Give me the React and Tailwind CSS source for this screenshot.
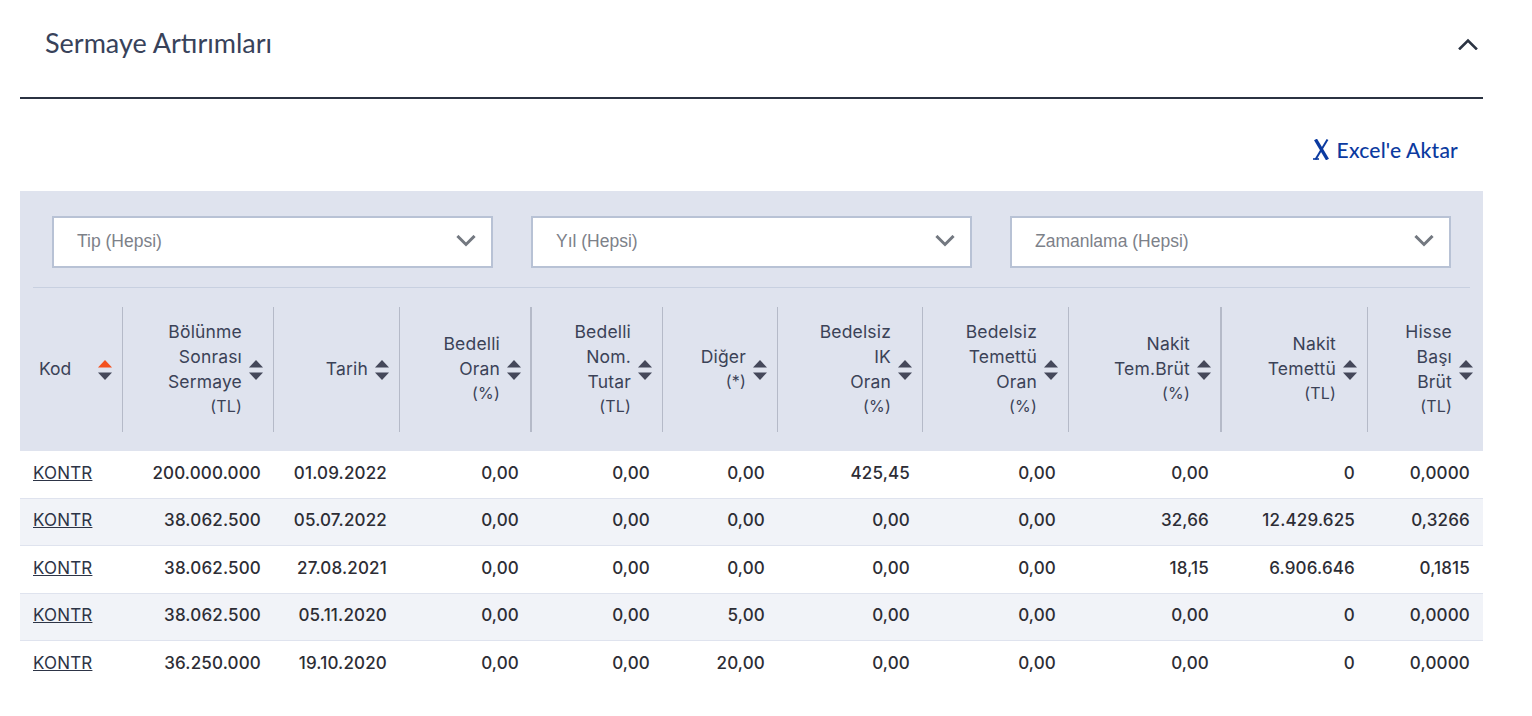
import React from "react";

const cols = "grid grid-cols-[103px_151px_126px_132px_131px_115px_145px_146px_153px_146px_115px]";

const headers = [
  { lines: ["Bölünme", "Sonrası", "Sermaye", "(TL)"] },
  { lines: ["Tarih"] },
  { lines: ["Bedelli", "Oran", "(%)"], thick: true },
  { lines: ["Bedelli", "Nom.", "Tutar", "(TL)"] },
  { lines: ["Diğer", "(*)"] },
  { lines: ["Bedelsiz", "IK", "Oran", "(%)"] },
  { lines: ["Bedelsiz", "Temettü", "Oran", "(%)"] },
  { lines: ["Nakit", "Tem.Brüt", "(%)"], thick: true },
  { lines: ["Nakit", "Temettü", "(TL)"] },
  { lines: ["Hisse", "Başı", "Brüt", "(TL)"], last: true },
];

const rows = [
  ["200.000.000", "01.09.2022", "0,00", "0,00", "0,00", "425,45", "0,00", "0,00", "0", "0,0000"],
  ["38.062.500", "05.07.2022", "0,00", "0,00", "0,00", "0,00", "0,00", "32,66", "12.429.625", "0,3266"],
  ["38.062.500", "27.08.2021", "0,00", "0,00", "0,00", "0,00", "0,00", "18,15", "6.906.646", "0,1815"],
  ["38.062.500", "05.11.2020", "0,00", "0,00", "5,00", "0,00", "0,00", "0,00", "0", "0,0000"],
  ["36.250.000", "19.10.2020", "0,00", "0,00", "20,00", "0,00", "0,00", "0,00", "0", "0,0000"],
];

const SortIcon = ({ active }) => (
  <svg width="14" height="20" viewBox="0 0 14 20" className="shrink-0">
    <path d="M7 0L14 7.5H0Z" fill={active ? "#f4511e" : "#45485a"} />
    <path d="M0 12.5H14L7 20Z" fill="#45485a" />
  </svg>
);

const Chevron = ({ up, color, width = 2 }) => (
  <svg width="20" height="12" viewBox="0 0 20 12" fill="none">
    <path
      d={up ? "M2 10.5L10 2.5L18 10.5" : "M2.5 2L10 9.5L17.5 2"}
      stroke={color}
      strokeWidth={width}
      strokeLinecap="square"
    />
  </svg>
);

const FilterSelect = ({ label }) => (
  <div className="flex h-[52px] items-center justify-between border-2 border-[#b8c2d5] bg-white pb-[2px] pl-[23px] pr-[15px] font-['Liberation_Sans',sans-serif] text-[17.5px] text-[#7d8189]">
    <span>{label}</span>
    <Chevron color="#737880" width={3} />
  </div>
);

const HeaderCell = ({ lines, thick, last }) => (
  <div
    className={`flex h-[125px] items-center justify-end gap-[7px] border-[#b5bac8] ${
      last ? "pr-[10px]" : thick ? "border-r-2 pr-[9px]" : "border-r pr-[10px]"
    }`}
  >
    <div className="pb-[2px] text-right text-[17.5px] leading-[25px] tracking-[0.01em] text-[#3b4257]">
      {lines.map((line) => (
        <div key={line} className={line.startsWith("(") ? "text-[16px]" : ""}>
          {line}
        </div>
      ))}
    </div>
    <SortIcon />
  </div>
);

const App = () => {
  return (
    <div className="ml-5 h-[716px] w-[1463px] bg-white font-['Inter',sans-serif]">
      <div className="flex h-[99px] items-start justify-between border-b-2 border-[#2b3342] pl-[25px] pr-[5px] pt-[24px]">
        <h2 className="font-['Lato',sans-serif] text-[27px] leading-[38px] text-[#38425a]">Sermaye Artırımları</h2>
        <div className="pt-[14px]">
          <Chevron up color="#2b3342" width={2.6} />
        </div>
      </div>

      <div className="flex h-[92px] items-center justify-end gap-[7px] pr-[25px] pt-[9px] text-[#0b3aa0]">
        <svg width="17" height="21" viewBox="0 0 17 21" fill="none" stroke="#0b3aa0">
          <path d="M2.5 0.5L14.5 20.5" strokeWidth="3.4" />
          <path d="M14.5 0.5L2.5 20.5" strokeWidth="2" />
          <path d="M0 20H6" strokeWidth="1.6" />
        </svg>
        <span className="font-['Lato',sans-serif] text-[21px] font-medium leading-none tracking-[0.01em]">Excel'e Aktar</span>
      </div>

      <div className="h-[260px] bg-[#dfe3ee]">
        <div className="grid grid-cols-3 gap-[38px] pl-8 pr-8 pt-[25px]">
          <FilterSelect label="Tip (Hepsi)" />
          <FilterSelect label="Yıl (Hepsi)" />
          <FilterSelect label="Zamanlama (Hepsi)" />
        </div>
        <div className="mx-[13px] mt-[19px] border-t border-[#c8d0e0]" />

        <div className={`${cols} pt-[19px]`}>
          <div className="flex h-[125px] items-center justify-between border-r border-[#b5bac8] pl-[19px] pr-[10px] text-[17.5px] text-[#3b4257]">
            <span>Kod</span>
            <SortIcon active />
          </div>
          {headers.map((h) => (
            <HeaderCell key={h.lines.join(" ")} {...h} />
          ))}
        </div>
      </div>

      {rows.map((row, i) => (
        <div
          key={row[1]}
          className={`${cols} h-[47.5px] items-center pb-[2px] text-[17px] font-medium tracking-[0.01em] text-[#2d2d35] ${
            i % 2 === 1 ? "bg-[#f1f3f8]" : "bg-white"
          } ${i < 4 ? "border-b-[1.5px] border-[#dfe3ee]" : ""}`}
        >
          <a href="#" className="pl-[13px] font-normal text-[#2d3446] underline">
            KONTR
          </a>
          {row.map((val, j) => (
            <div key={j} className="pr-[13px] text-right">
              {val}
            </div>
          ))}
        </div>
      ))}
    </div>
  );
};

export default App;
